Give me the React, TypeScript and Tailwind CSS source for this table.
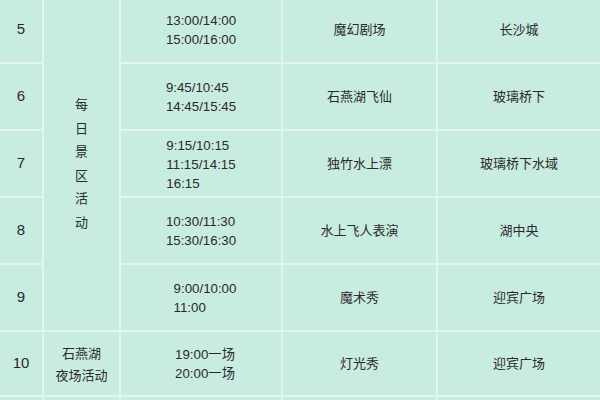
const rows = [
  { no: "5", times: ["13:00/14:00", "15:00/16:00"], name: "魔幻剧场", place: "长沙城" },
  { no: "6", times: ["9:45/10:45", "14:45/15:45"], name: "石燕湖飞仙", place: "玻璃桥下" },
  { no: "7", times: ["9:15/10:15", "11:15/14:15", "16:15"], name: "独竹水上漂", place: "玻璃桥下水域" },
  { no: "8", times: ["10:30/11:30", "15:30/16:30"], name: "水上飞人表演", place: "湖中央" },
  { no: "9", times: ["9:00/10:00", "11:00"], name: "魔术秀", place: "迎宾广场", shift: true },
  { no: "10", times: ["19:00一场", "20:00一场"], name: "灯光秀", place: "迎宾广场", shift: true },
];

const cell = "bg-[#c9ece1] flex items-center justify-center text-[#2a2a2a]";

export default function App() {
  return (
    <div
      className="w-[600px] h-[400px] overflow-hidden bg-[#e3f5ef]"
      style={{ fontFamily: '"Liberation Sans", "Noto Sans CJK SC", sans-serif' }}
    >
      <div className="-mt-[3px] grid grid-cols-[42px_75px_160px_153px_162px] grid-rows-[65px_65px_65px_65px_65px_63px_40px] gap-[2px] bg-[#e3f5ef]">
        {rows.map((r, i) => (
          <div key={r.no} className="contents">
            <div className={`${cell} text-[15px] col-start-1`} style={{ gridRow: i + 1 }}>
              {r.no}
            </div>
            {i === 0 && (
              <div className={`${cell} col-start-2 row-start-1 row-span-5 flex-col text-[13px] leading-[23.5px]`}>
                {"每日景区活动".split("").map((c) => (
                  <span key={c}>{c}</span>
                ))}
              </div>
            )}
            {i === 5 && (
              <div className={`${cell} col-start-2 row-start-6 flex-col text-[13px] leading-[22px] pt-[2px]`}>
                <span>石燕湖</span>
                <span>夜场活动</span>
              </div>
            )}
            <div className={`${cell} col-start-3`} style={{ gridRow: i + 1 }}>
              <div className={`flex flex-col text-left text-[13.3px] leading-[19px] pt-[1px] ${r.shift ? "pl-[8px]" : ""}`}>
                {r.times.map((t) => (
                  <span key={t}>{t}</span>
                ))}
              </div>
            </div>
            <div className={`${cell} col-start-4 text-[13px]`} style={{ gridRow: i + 1 }}>
              {r.name}
            </div>
            <div className={`${cell} col-start-5 text-[13px]`} style={{ gridRow: i + 1 }}>
              {r.place}
            </div>
          </div>
        ))}
        <div className={`${cell} col-start-1 row-start-7`} />
        <div className={`${cell} col-start-2 row-start-7`} />
        <div className={`${cell} col-start-3 row-start-7`} />
        <div className={`${cell} col-start-4 row-start-7`} />
        <div className={`${cell} col-start-5 row-start-7`} />
      </div>
    </div>
  );
}
